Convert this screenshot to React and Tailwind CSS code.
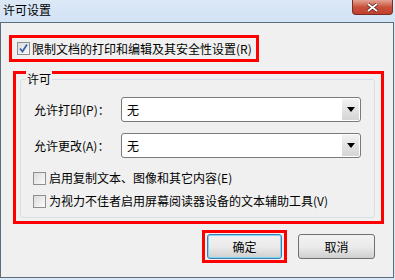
import React from 'react';

const font = { fontFamily: '"Noto Sans CJK SC", "Liberation Sans", sans-serif' };

// Win7 style checkbox
const Box = ({ checked }) => (
  <span className="w-[13px] h-[13px] border border-[#8e8f8f] bg-gradient-to-br from-[#dcdcdc] to-[#fbfbfb] flex items-center justify-center shrink-0">
    {checked && (
      <svg width="11" height="11" viewBox="0 0 11 11">
        <path d="M2 5.5 L4.5 8.5 L9 1.5" fill="none" stroke="#3a62a8" strokeWidth="1.8" />
      </svg>
    )}
  </span>
);

const Select = () => (
  <div className="w-[240px] h-[25px] border border-[#7a7a7a] rounded-[3px] bg-white flex items-stretch p-[1px]">
    <span className="flex-1 pl-[4px] text-[12px] leading-[21px] text-black">无</span>
    <span className="w-[17px] bg-gradient-to-b from-[#f2f2f2] to-[#d5d5d5] flex items-center justify-center">
      <svg width="8" height="5" viewBox="0 0 8 5">
        <path d="M0 0 H8 L4 5 Z" fill="#000" />
      </svg>
    </span>
  </div>
);

const App = () => {
  return (
    <div className="w-[395px] h-[280px] bg-[#d9e7f6] flex flex-col" style={font}>
      {/* title bar */}
      <div className="h-[22px] flex justify-between bg-gradient-to-b from-[#dbe8f6] to-[#d2e3f5]">
        <span className="pl-[3px] pt-[2px] text-[12px] leading-[16px] text-black">许可设置</span>
        <div className="mr-[2px] w-[41px] h-[15px] rounded-b-[4px] border border-t-0 border-[#7a2d24] bg-gradient-to-b from-[#e3a393] via-[#c9513c] to-[#c0402c] flex items-center justify-center">
          <svg width="11" height="9" viewBox="0 0 11 9">
            <path d="M1 1 L10 8 M10 1 L1 8" stroke="#4b1b15" strokeWidth="3.2" />
            <path d="M1 1 L10 8 M10 1 L1 8" stroke="#ffffff" strokeWidth="1.8" />
          </svg>
        </div>
      </div>

      {/* dialog body */}
      <div className="w-[394px] h-[256px] border border-[#5d6c7c] bg-[#f0f0f0] text-[12px] text-black">
        <div className="ml-[8px] mt-[12px] w-[250px] h-[27px] border-[3px] border-[#ff0000] flex items-center gap-[2px] pl-[5px]">
          <Box checked />
          <span className="leading-[16px]">限制文档的打印和编辑及其安全性设置(R)</span>
        </div>

        <div className="ml-[12px] mt-[9px] w-[371px] h-[153px] border-[3px] border-[#ff0000] pl-[4px] pt-[5px]">
          <div className="relative w-[355px] h-[139px] border border-[#d5dfe5] rounded-[3px] pl-[12px] pt-[17px]">
            <span className="absolute left-[5px] top-[-9px] px-[1px] bg-[#f0f0f0] leading-[16px]">许可</span>
            <div className="flex items-center h-[25px]">
              <span className="w-[88px] pl-[1px]">允许打印(P)：</span>
              <Select />
            </div>
            <div className="flex items-center h-[25px] mt-[11px]">
              <span className="w-[88px] pl-[1px]">允许更改(A)：</span>
              <Select />
            </div>
            <div className="flex items-center gap-[3px] h-[20px] mt-[10px]">
              <Box />
              <span>启用复制文本、图像和其它内容(E)</span>
            </div>
            <div className="flex items-center gap-[3px] h-[20px] mt-[3px]">
              <Box />
              <span>为视力不佳者启用屏幕阅读器设备的文本辅助工具(V)</span>
            </div>
          </div>
        </div>

        <div className="flex items-center mt-[6px] ml-[201px]">
          <div className="w-[85px] h-[33px] border-[3px] border-[#ff0000] flex items-center justify-center">
            <button className="w-[75px] h-[25px] rounded-[3px] border border-[#3c7fb1] shadow-[inset_0_0_0_1px_#7fd6f6] bg-gradient-to-b from-[#f2f2f2] via-[#ebebeb] to-[#cfcfcf] text-[12px]">
              确定
            </button>
          </div>
          <button className="ml-[11px] w-[77px] h-[25px] rounded-[3px] border border-[#707070] bg-gradient-to-b from-[#f2f2f2] via-[#ebebeb] to-[#cfcfcf] text-[12px]">
            取消
          </button>
        </div>
      </div>
    </div>
  );
};

export default App;
